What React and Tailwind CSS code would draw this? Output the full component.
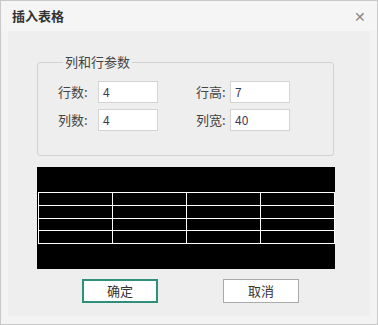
import React from 'react';

const font = { fontFamily: '"Noto Sans CJK SC", "Noto Sans", sans-serif' };

const Field = ({ label, value, labelWidth }) => (
  <div className="flex items-center">
    <span className={`${labelWidth} text-[13px] leading-[22px] text-[#444]`}>{label}</span>
    <div className="w-[60px] h-[22px] bg-white border border-[#d4d4d4] flex items-center pl-[4px] text-[12px] text-[#3a3a5a]">
      {value}
    </div>
  </div>
);

const rows = [13, 13, 12, 13];

export default function App() {
  return (
    <div
      className="w-[378px] h-[325px] bg-[#f3f3f3] border border-[#c9c9c9] flex flex-col"
      style={font}
    >
      {/* title bar */}
      <div className="h-[30px] shrink-0 flex items-center justify-between pl-[11px] pr-[11px] bg-[#f5f5f5]">
        <span className="text-[13px] font-bold text-[#333]">插入表格</span>
        <span className="text-[14px] leading-none text-[#888]">✕</span>
      </div>

      {/* body */}
      <div className="mx-[7px] h-[285px] bg-[#eeeeee] flex flex-col pl-[29px]">
        <fieldset className="mt-[22px] w-[297px] border border-[#d2d2d2] rounded-[3px] pt-[10px] pb-[24px] pl-[20px]">
          <legend className="ml-[5px] px-[2px] text-[13px] leading-[18px] text-[#444]">列和行参数</legend>
          <div className="flex flex-col gap-[6px]">
            <div className="flex gap-[38px]">
              <Field label="行数:" value="4" labelWidth="w-[40px]" />
              <Field label="行高:" value="7" labelWidth="w-[34px]" />
            </div>
            <div className="flex gap-[38px]">
              <Field label="列数:" value="4" labelWidth="w-[40px]" />
              <Field label="列宽:" value="40" labelWidth="w-[34px]" />
            </div>
          </div>
        </fieldset>

        {/* preview */}
        <div className="mt-[11px] w-[298px] h-[102px] bg-black pt-[25px] pl-[1px]">
          <div className="w-[297px] border-r border-b border-white">
            {rows.map((h, i) => (
              <div key={i} className="flex" style={{ height: h }}>
                {[0, 1, 2, 3].map((c) => (
                  <div key={c} className="w-[74px] h-full border-l border-t border-white" />
                ))}
              </div>
            ))}
          </div>
        </div>

        {/* buttons */}
        <div className="mt-[10px] flex gap-[65px] pl-[45px]">
          <button className="w-[76px] h-[24px] bg-white border-2 border-[#2f8f7c] text-[13px] text-[#333]">确定</button>
          <button className="w-[76px] h-[24px] bg-white border border-[#aaaaaa] text-[13px] text-[#333]">取消</button>
        </div>
      </div>
    </div>
  );
}
